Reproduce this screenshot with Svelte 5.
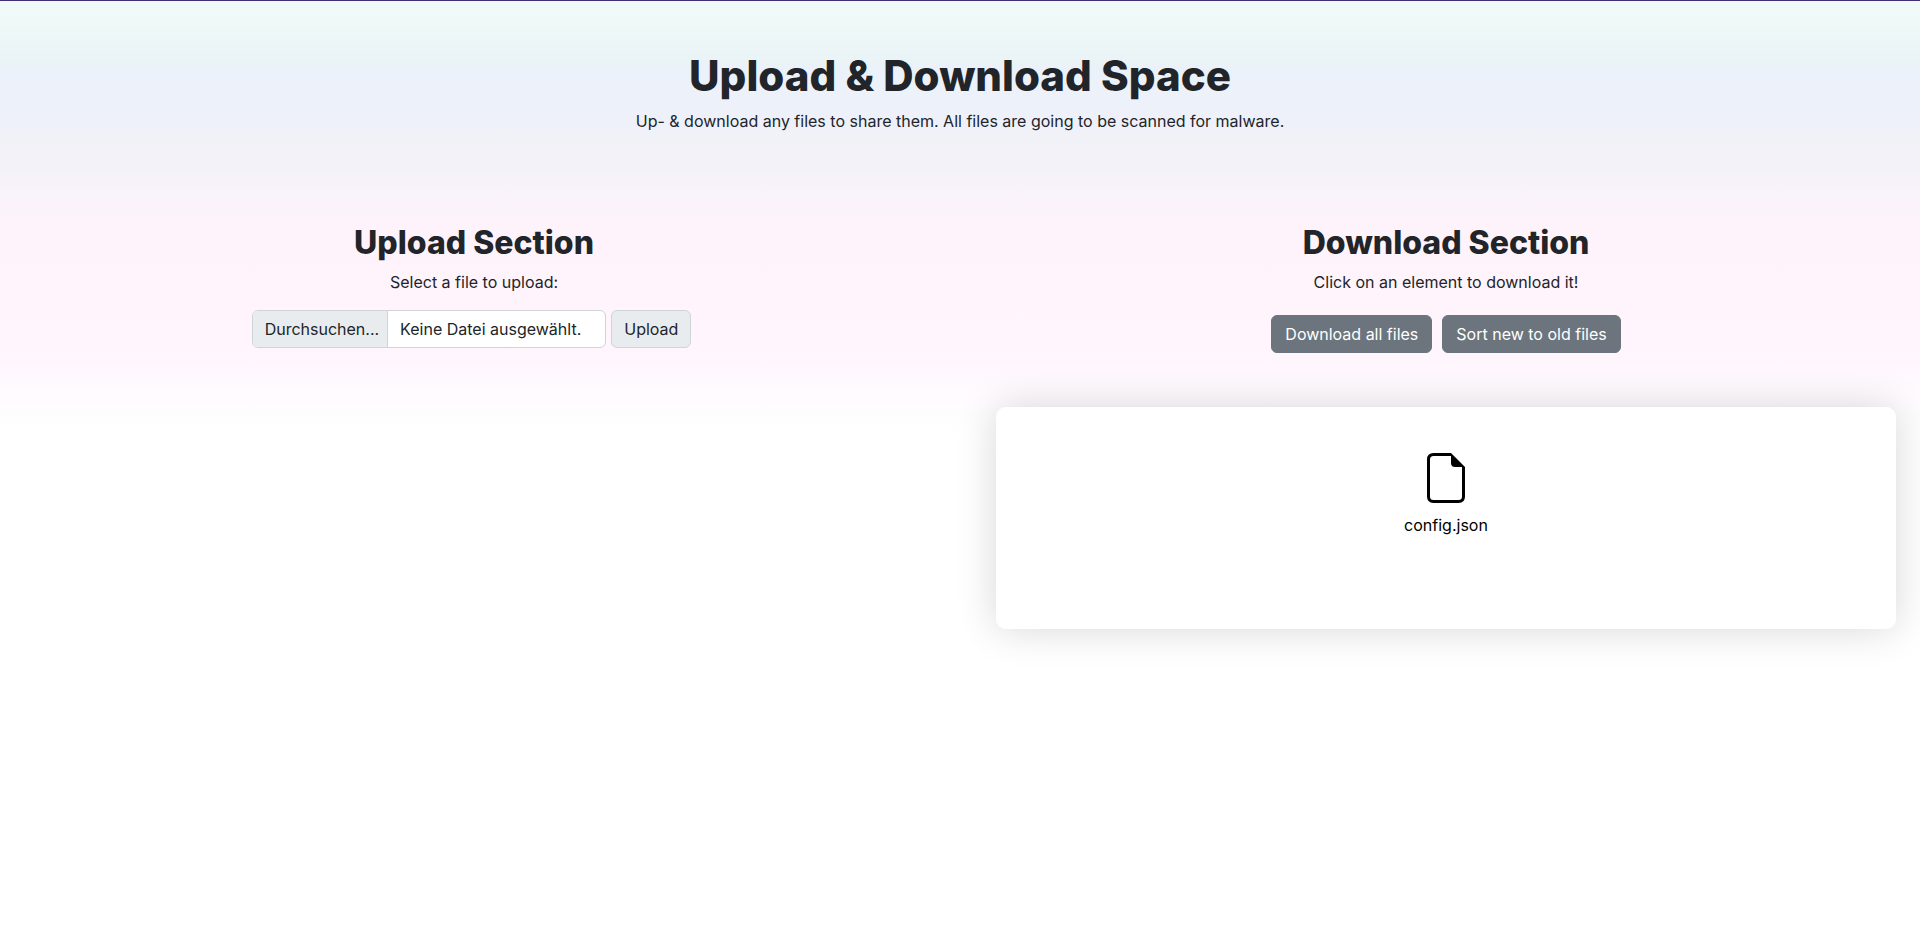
<script>
  const files = ['config.json'];
</script>

<div class="page">
  <header>
    <h1>Upload &amp; Download Space</h1>
    <p>Up- &amp; download any files to share them. All files are going to be scanned for malware.</p>
  </header>

  <main>
    <section>
      <h2>Upload Section</h2>
      <p>Select a file to upload:</p>
      <form class="upload">
        <input id="file" class="file-input" type="file" />
        <label class="picker" for="file">
          <span class="browse">Durchsuchen...</span>
          <span class="chosen">Keine Datei ausgewählt.</span>
        </label>
        <button class="submit" type="button">Upload</button>
      </form>
    </section>

    <section class="downloads">
      <h2>Download Section</h2>
      <p>Click on an element to download it!</p>
      <div class="actions">
        <button type="button">Download all files</button>
        <button type="button">Sort new to old files</button>
      </div>
      <div class="card">
        {#each files as name}
          <a class="file" href="#{name}">
            <svg width="38" height="50" viewBox="0 0 38 50" aria-hidden="true">
              <path d="M24 1.500H6.500Q1.500 1.500 1.500 6.500V43.500Q1.500 48.500 6.500 48.500H31.500Q36.500 48.500 36.500 43.500V14" fill="none" stroke="#000" stroke-width="3" />
              <path d="M24 0L38 14H28Q24 14 24 10Z" />
            </svg>
            <span>{name}</span>
          </a>
        {/each}
      </div>
    </section>
  </main>
</div>

<style>
  :global(body) {
    margin: 0;
    background: #fff;
  }

  .page {
    box-sizing: border-box;
    min-height: 100vh;
    padding-top: 50px;
    border-top: 1px solid #432f78;
    background: linear-gradient(
      180deg,
      #f0faf8 0,
      #effaf8 16px,
      #eaf3f6 60px,
      #ebf1fa 68px,
      #eff1fa 124px,
      #f1f1f8 132px,
      #f4f2f9 168px,
      #f7f2fa 178px,
      #fbf3fa 214px,
      #fef2fb 222px,
      #fff4fc 300px,
      #fff5fd 350px,
      #fff9fe 380px,
      #fffcff 400px,
      #fefefe 420px,
      #fff 440px
    );
    color: #212529;
    font-family: Inter, sans-serif;
    font-size: 16px;
    line-height: 24px;
    text-align: center;
  }

  h1,
  h2,
  p {
    margin: 0;
  }

  h1,
  h2 {
    margin-bottom: 8px;
    font-weight: 800;
  }

  h1 {
    font-size: 42px;
    line-height: 50px;
  }

  h2 {
    font-size: 32px;
    line-height: 38px;
  }

  main {
    display: grid;
    grid-template-columns: 1fr 1fr;
    gap: 24px;
    margin-top: 91px;
  }

  .upload {
    display: flex;
    justify-content: center;
    gap: 5px;
    margin: 16px 5px 0 0;
  }

  .file-input {
    position: absolute;
    width: 1px;
    height: 1px;
    opacity: 0;
  }

  button {
    padding: 6px 13px;
    border: 1px solid #6c757d;
    border-radius: 6px;
    background: #6c757d;
    color: #fff;
    font: inherit;
    cursor: pointer;
  }

  .picker {
    display: flex;
    overflow: hidden;
    border: 1px solid #ced4da;
    border-radius: 6px;
    background: #fff;
    cursor: pointer;
  }

  .browse {
    padding: 6px 8px 6px 12px;
    border-right: 1px solid #ced4da;
    background: #e9ecef;
  }

  .chosen {
    padding: 6px 24px 6px 12px;
  }

  .submit {
    padding: 6px 12px;
    border-color: #ced4da;
    background: #e9ecef;
    color: #212529;
  }

  .downloads {
    padding: 0 24px;
  }

  .actions {
    display: flex;
    justify-content: center;
    gap: 10px;
    margin-top: 21px;
  }

  .card {
    display: flex;
    box-sizing: border-box;
    justify-content: center;
    min-height: 222px;
    margin-top: 54px;
    padding: 46px 24px;
    border-radius: 10px;
    background: rgba(255, 255, 255, 0.8);
    box-shadow: 0 0 40px rgba(0, 0, 0, 0.16);
  }

  .file {
    display: flex;
    flex-direction: column;
    align-items: center;
    gap: 10px;
    color: #000;
    text-decoration: none;
  }
</style>
